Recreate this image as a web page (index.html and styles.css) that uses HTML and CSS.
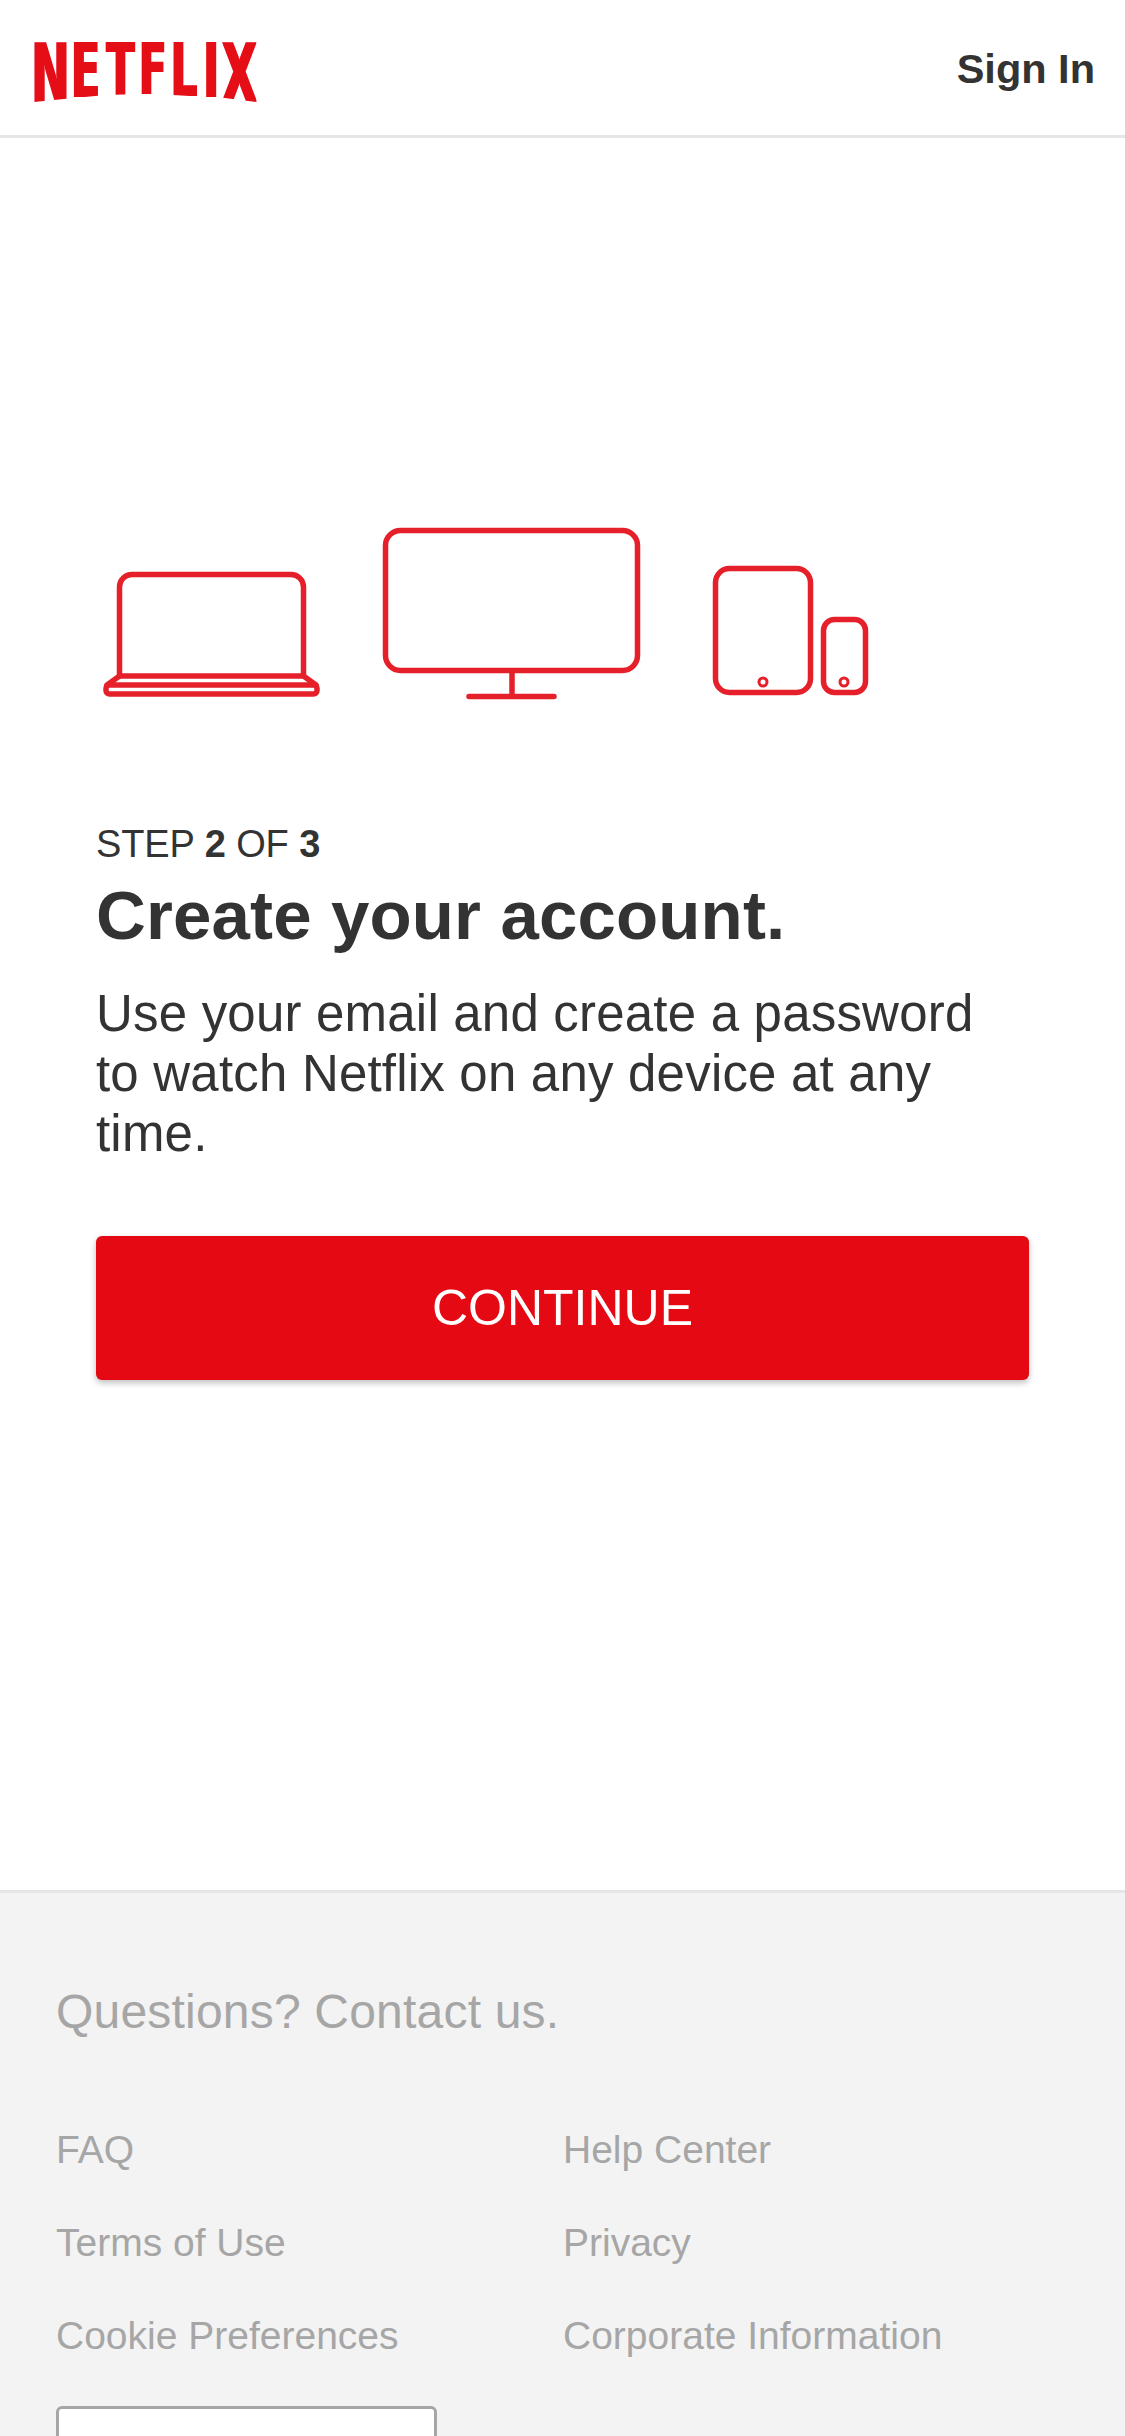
FILE: index.html
```html
<!DOCTYPE html>
<html lang="en">
<head>
<meta charset="utf-8">
<title>Netflix</title>
<link rel="stylesheet" href="styles.css">
</head>
<body>
<div class="page">
  <header class="topbar">
    <svg class="logo" width="240" height="100" viewBox="30 25 240 100" role="img" aria-label="Netflix">
      <defs>
        <clipPath id="arch"><path d="M30 42H256.500V102L221 97.500L206 97L173 95L141 94L106 95L74 98L34 102L30 103Z"/></clipPath>
        <filter id="heavy" x="-5%" y="-5%" width="110%" height="110%"><feMorphology operator="dilate" radius="0.8 0"/></filter>
      </defs>
      <g clip-path="url(#arch)">
        <g filter="url(#heavy)">
          <text class="logo-word" transform="scale(.56 1)"><tspan class="fs82" x="56" y="102">N</tspan><tspan class="fs76" x="127" y="97.500">E</tspan><tspan class="fs73" x="190" y="95">T</tspan><tspan class="fs72" x="248" y="94">F</tspan><tspan class="fs74" x="305" y="96">L</tspan><tspan class="fs76" x="363" y="97.500">I</tspan><tspan class="fs82" x="396" y="102">X</tspan></text>
        </g>
      </g>
    </svg>
    <a class="signin">Sign In</a>
  </header>
  <main class="content">
    <svg class="devices" width="780" height="180" viewBox="100 522 780 180" aria-hidden="true">
      <g class="device-lines">
        <path d="M119.500 676V587a12.500 12.500 0 0 1 12.500-12.500h159a12.500 12.500 0 0 1 12.500 12.500V676Z"/>
        <path d="M119.500 676L107 685M303.500 676L316 685"/>
        <rect x="106" y="685" width="211" height="9" rx="3.500"/>
        <rect x="385.500" y="530.500" width="252" height="140" rx="15"/>
        <path d="M512 671V696M469 696.500H554"/>
        <rect x="715.500" y="568.500" width="95" height="124" rx="14"/>
        <circle class="home" cx="763" cy="682" r="4"/>
        <rect x="823.500" y="619.500" width="42" height="73" rx="11"/>
        <circle class="home" cx="844" cy="682" r="4"/>
      </g>
    </svg>
    <p class="step">STEP <b>2</b> OF <b>3</b></p>
    <h1 class="title">Create your account.</h1>
    <p class="lead">Use your email and create a password to watch Netflix on any device at any time.</p>
    <button class="cta" type="button">CONTINUE</button>
  </main>
  <footer class="foot">
    <p class="contact">Questions? Contact us.</p>
    <ul class="links">
      <li>FAQ</li>
      <li>Help Center</li>
      <li>Terms of Use</li>
      <li>Privacy</li>
      <li>Cookie Preferences</li>
      <li>Corporate Information</li>
    </ul>
    <div class="lang"></div>
  </footer>
</div>
</body>
</html>
```

FILE: styles.css
```css
* { box-sizing: border-box; }
html, body { margin: 0; padding: 0; background: #fff; }
.page {
  width: 1125px;
  height: 2436px;
  overflow: hidden;
  display: flex;
  flex-direction: column;
  font-family: "Liberation Sans", Arial, sans-serif;
  color: #333;
}
.topbar {
  flex: none;
  height: 138px;
  border-bottom: 3px solid #e6e6e6;
  display: flex;
  align-items: flex-start;
  justify-content: space-between;
  padding: 25px 30px 0 30px;
}
.logo { display: block; }
.logo-word {
  font-family: "DejaVu Sans", sans-serif;
  font-weight: 700;
  fill: #e50914;
}
.fs82 { font-size: 82px; }
.fs76 { font-size: 76px; }
.fs74 { font-size: 74px; }
.fs73 { font-size: 73px; }
.fs72 { font-size: 72px; }
.signin {
  font-size: 41.5px;
  line-height: 48px;
  font-weight: 700;
  margin-top: 20px;
  color: #333;
}
.content {
  flex: none;
  height: 1752px;
  padding: 384px 96px 0 96px;
}
.devices { display: block; margin: 0 0 0 4px; }
.device-lines { fill: none; stroke: #e5202a; stroke-width: 5.5; stroke-linecap: round; stroke-linejoin: round; }
.home { stroke-width: 3; }
.step {
  margin: 119px 0 0;
  font-size: 38px;
  line-height: 46px;
  letter-spacing: -.1px;
}
.title {
  margin: 9px 0 0;
  font-size: 69px;
  line-height: 80px;
  font-weight: 700;
  letter-spacing: .15px;
}
.lead {
  margin: 28px 0 0;
  max-width: 900px;
  font-size: 51px;
  line-height: 60px;
  letter-spacing: .2px;
}
.cta {
  display: block;
  width: 100%;
  height: 144px;
  margin: 72px 0 0;
  border: 0;
  border-radius: 6px;
  background: #e50914;
  color: #fff;
  font-family: "Liberation Sans", sans-serif;
  font-size: 50px;
  box-shadow: 0 3px 6px rgba(0, 0, 0, .25);
}
.foot {
  flex: 1;
  background: #f3f3f3;
  border-top: 3px solid #e6e6e6;
  padding: 0 56px;
  color: #a6a6a6;
}
.contact {
  margin: 89px 0 0;
  font-size: 48px;
  line-height: 60px;
  letter-spacing: .2px;
}
.links {
  list-style: none;
  margin: 85px 0 0;
  padding: 0;
  display: grid;
  grid-template-columns: 507px 1fr;
  grid-auto-rows: 93px;
  font-size: 39px;
  line-height: 46px;
}
.lang {
  width: 381px;
  height: 100px;
  margin-top: 0;
  background: #fff;
  border: 3px solid #a6a6a6;
  border-radius: 6px;
}
```
